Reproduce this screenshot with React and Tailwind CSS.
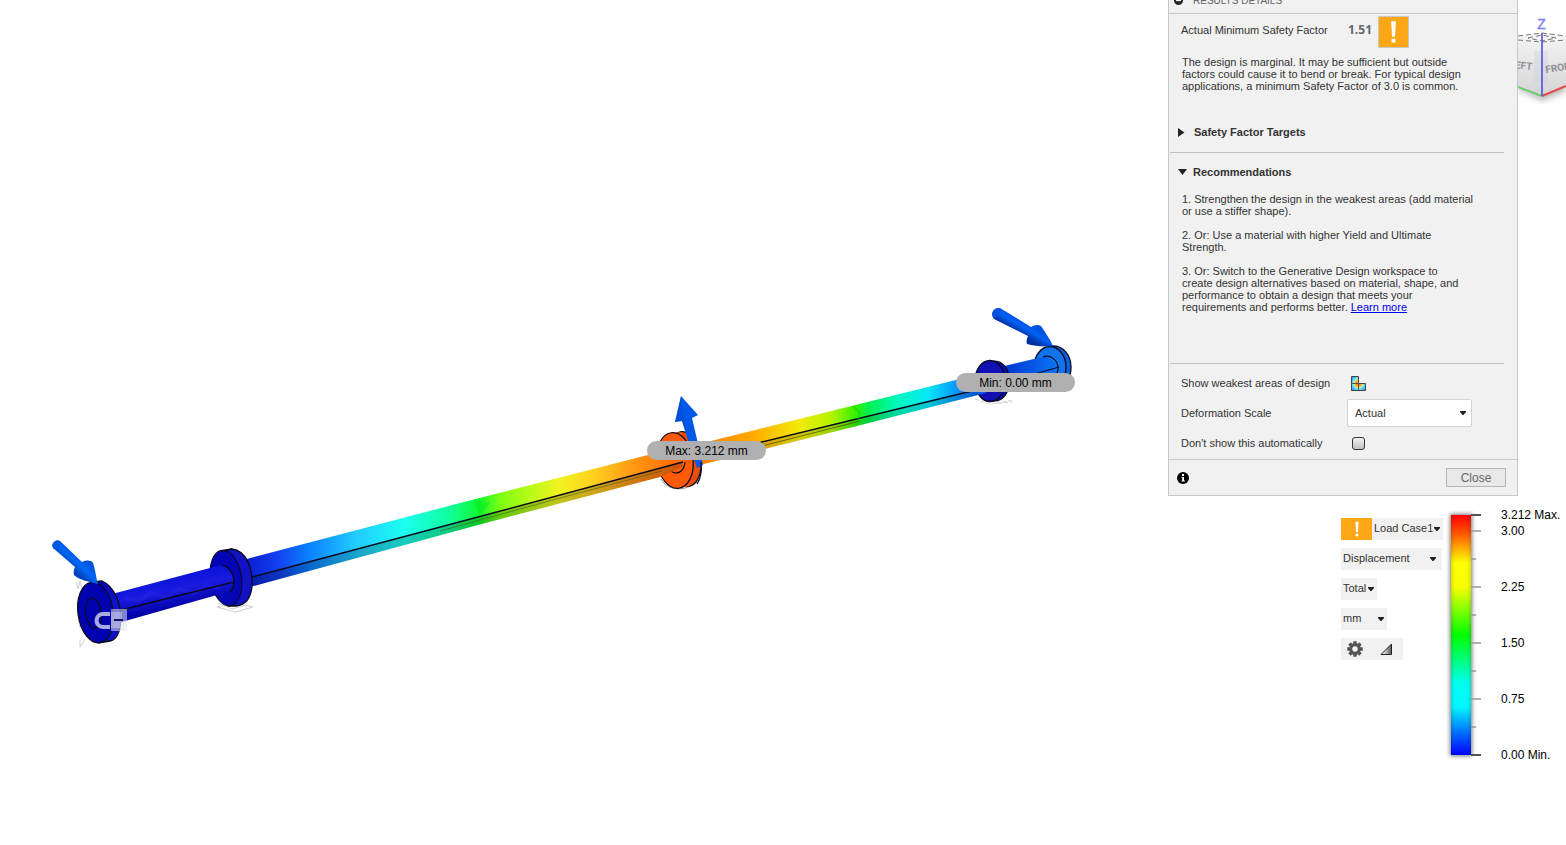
import React from 'react';

const ink = '#0a0a1e';

function BeamModel() {
  return (
    <svg className="block h-[700px] w-[1100px] max-w-none" viewBox="0 0 1100 700" role="img" aria-label="Deformed shaft">
      <defs>
        <linearGradient id="rodMid" gradientUnits="userSpaceOnUse" x1="247" y1="0" x2="685" y2="0">
          <stop offset="0" stopColor="#0a1ecf" />
          <stop offset="0.07" stopColor="#1240f0" />
          <stop offset="0.14" stopColor="#0a80ff" />
          <stop offset="0.25" stopColor="#22ccff" />
          <stop offset="0.36" stopColor="#1cfff0" />
          <stop offset="0.46" stopColor="#10ffa0" />
          <stop offset="0.53" stopColor="#10f830" />
          <stop offset="0.58" stopColor="#80ff10" />
          <stop offset="0.71" stopColor="#f0f420" />
          <stop offset="0.79" stopColor="#ffd020" />
          <stop offset="0.88" stopColor="#ff9a14" />
          <stop offset="1" stopColor="#ff6000" />
        </linearGradient>
        <linearGradient id="rodRight" gradientUnits="userSpaceOnUse" x1="695" y1="0" x2="985" y2="0">
          <stop offset="0" stopColor="#ff7a00" />
          <stop offset="0.2" stopColor="#ffac00" />
          <stop offset="0.36" stopColor="#f3ea08" />
          <stop offset="0.47" stopColor="#b4f400" />
          <stop offset="0.55" stopColor="#3cf000" />
          <stop offset="0.6" stopColor="#00f050" />
          <stop offset="0.7" stopColor="#00f8c0" />
          <stop offset="0.8" stopColor="#06e8f4" />
          <stop offset="0.9" stopColor="#0a98fc" />
          <stop offset="1" stopColor="#0a50e0" />
        </linearGradient>
        <linearGradient id="rodLeft" gradientUnits="userSpaceOnUse" x1="160" y1="578" x2="167" y2="612">
          <stop offset="0" stopColor="#0a14d8" />
          <stop offset="0.4" stopColor="#1a1ae0" />
          <stop offset="1" stopColor="#0000a0" />
        </linearGradient>
        <linearGradient id="rodEnd" gradientUnits="userSpaceOnUse" x1="1000" y1="0" x2="1058" y2="0">
          <stop offset="0" stopColor="#0030d0" />
          <stop offset="1" stopColor="#0c74f4" />
        </linearGradient>
        <linearGradient id="flangeBlue" x1="0" y1="0" x2="1" y2="0">
          <stop offset="0" stopColor="#0000b4" />
          <stop offset="1" stopColor="#1414cc" />
        </linearGradient>
        <linearGradient id="arrowLeft" gradientUnits="userSpaceOnUse" x1="82" y1="555" x2="70" y2="568">
          <stop offset="0" stopColor="#0050d8" />
          <stop offset="0.5" stopColor="#0068f4" />
          <stop offset="1" stopColor="#0040b8" />
        </linearGradient>
        <linearGradient id="arrowRight" gradientUnits="userSpaceOnUse" x1="1020" y1="318" x2="1013" y2="330">
          <stop offset="0" stopColor="#0050e0" />
          <stop offset="0.45" stopColor="#0060f4" />
          <stop offset="1" stopColor="#0030a0" />
        </linearGradient>
      </defs>

      {/* right end flange and stub */}
      <path d="M1051 346 C1063 345 1071 355 1071 367 C1071 378 1066 386 1058 387 L1048 387 Z" fill="#0a62e0" stroke={ink} strokeWidth="1.3" />
      <ellipse cx="1050" cy="367" rx="16" ry="20.5" fill="#1274ec" stroke={ink} strokeWidth="1.3" />
      <path d="M1000 367 L1042 357 C1052 357 1058 364 1057 374 L1050 379 L1004 390 Z" fill="url(#rodEnd)" />
      <path d="M1024 377 L1059 367" stroke={ink} strokeWidth="1" />
      <path d="M1043 357 C1050 354 1058 360 1058 368 C1058 373 1056 376 1053 378" fill="none" stroke={ink} strokeWidth="1.2" />

      {/* support flange at the minimum */}
      <path d="M985 398 l12 5 l16 -3 M975 399 l14 5 l23 -2" stroke="#cfcfcf" strokeDasharray="4 2" fill="none" />
      <ellipse cx="995" cy="381" rx="14.500" ry="20" fill="#0c0cb4" stroke={ink} strokeWidth="1.2" />
      <ellipse cx="990" cy="381" rx="15" ry="20.500" fill="#1010b4" stroke={ink} strokeWidth="1.3" />

      {/* right span */}
      <path d="M699 444 L980 374 C986 378 989 386 986 393 L978 395 L857 426 L700 465 Z" fill="url(#rodRight)" />
      <path d="M762 443 L978 389 L978 395 L857 426 L750 453 Z" fill="#000" opacity="0.13" />
      <path d="M700 458 L762 442 L980 389" stroke={ink} strokeWidth="1.3" fill="none" />
      <path d="M762 446 L860 421" stroke="#4c4a10" strokeWidth="1" opacity="0.75" />
      <path d="M853 406 L860 413 L857 425" fill="none" stroke="#00d000" strokeWidth="2" opacity="0.4" />

      {/* centre flange */}
      <path d="M661 479 C668 491 684 492 697 482" fill="none" stroke="#8c8c8c" strokeWidth="1" />
      <ellipse cx="685" cy="459" rx="16" ry="27.500" transform="rotate(-8 685 459)" fill="#e84c08" stroke={ink} strokeWidth="1.3" />
      <path d="M672 433 L682 432 L690 486 L680 488 Z" fill="#f05408" />
      <ellipse cx="675" cy="460.500" rx="18" ry="28" transform="rotate(-8 675 460.500)" fill="#ff5a08" stroke={ink} strokeWidth="1.2" />
      <path d="M671 471 C676 475 684 473 685 462" fill="none" stroke={ink} strokeWidth="1.2" />

      {/* middle span */}
      <path d="M243 560 L460 503 L648 455 L676 447 C684 452 687 462 682 467 L660 477 L478 525 L250 587 Z" fill="url(#rodMid)" />
      <path d="M250 577.500 L478 517 L683 462 L682 467 L660 477 L478 525 L250 587 Z" fill="#000" opacity="0.2" />
      <path d="M250 577.500 L478 517 L683 462" stroke={ink} strokeWidth="1.4" fill="none" />
      <path d="M440 531 L560 498 L662 471" stroke="#4c5818" strokeWidth="1" fill="none" opacity="0.6" />
      <path d="M474 499 L490 503 L480 517" fill="#00e010" opacity="0.35" />

      {/* second flange */}
      <path d="M217 607 l18 -4 l18 4 l-18 5 Z M218 603 l14 6 l14 -4" stroke="#d0d0d0" fill="none" strokeWidth="1" />
      <path d="M221 551 L232 549 C246 551 253 567 252 586 C251 599 245 605 236 606 L228 606 Z" fill="#1212c4" stroke={ink} strokeWidth="1.3" />
      <ellipse cx="226" cy="578" rx="15.500" ry="28" transform="rotate(-9 226 578)" fill="#0404b4" stroke={ink} strokeWidth="1.1" />
      <path d="M222 551 L232 549" stroke={ink} strokeWidth="1.3" />

      {/* left span */}
      <path d="M112 594 L210 568 L222 565 C231 567 236 578 233 588 L230 592 L217 595 L118 623 Z" fill="url(#rodLeft)" />
      <path d="M125 598 l14 3 l12 -8 l15 4 l14 -8 l14 4 l12 -8 l14 3" fill="none" stroke="#3434f0" strokeWidth="4" opacity="0.25" />
      <path d="M222 565 C231 567 236 578 233 588 L230 592" fill="none" stroke={ink} strokeWidth="1.3" />
      <path d="M118 611 L165 599 L234 582" stroke={ink} strokeWidth="1.3" fill="none" />

      {/* left end flange */}
      <path d="M76 582 l2 7 l2 -8 l2 8 M80 596 l-2 9 l3 -6 M80 640 l0 7 l5 -8 M82 620 l-3 7 l4 -2" stroke="#cfcfcf" fill="none" />
      <path d="M92 582 L102 581 C114 586 121 603 121 620 C120 633 116 640 110 641 L99 643 Z" fill="url(#flangeBlue)" stroke={ink} strokeWidth="1.3" />
      <ellipse cx="95.500" cy="612.500" rx="17.500" ry="30.500" transform="rotate(-8 95.500 612.500)" fill="#0202b0" stroke={ink} strokeWidth="1.3" />
      <ellipse cx="93.500" cy="613" rx="8" ry="15" transform="rotate(-8 93.500 613)" fill="none" stroke={ink} strokeWidth="1.2" />

      {/* fixed constraint glyph */}
      <rect x="111" y="609" width="16" height="22" fill="#e4e4f4" opacity="0.55" />
      <rect x="111" y="612" width="11" height="16" fill="#fff" opacity="0.3" />
      <path d="M110 614 H103 A6 6 0 0 0 103 627 H110" fill="none" stroke="#c8c8f0" strokeWidth="4" opacity="0.85" />
      <path d="M114 620 H123" stroke="#101070" strokeWidth="2" />

      {/* load arrows */}
      <path d="M60 541 L82 562 C86 560 91 560 93 563 C95 568 96 577 98 584 C90 582 79 580 74 575 C73 572 74 569 75 567 L53 548 C51 543 56 539 60 541 Z" fill="url(#arrowLeft)" />
      <ellipse cx="56.500" cy="544.500" rx="3.500" ry="4.500" transform="rotate(45 56.500 544.500)" fill="#0058e0" />
      <path d="M1000 308 L1031 327 C1034 325 1038 324 1041 326 C1045 332 1050 339 1053 346 C1044 347 1034 346 1027 344 C1026 341 1027 338 1028 336 L994 319 C990 314 994 307 1000 308 Z" fill="url(#arrowRight)" />
      <ellipse cx="996" cy="313" rx="3.500" ry="5" transform="rotate(28 996 313)" fill="#0050d8" />
      <path d="M681 396 L698 415 L692 418 L703 465 L697 468 L682 421 L675 422 Z" fill="#0058e8" />
      <path d="M681 396 L675 422 L682 421 L686 434 Z" fill="#0048c8" opacity="0.5" />
      <path d="M697 484 C701 478 702 470 701 462" stroke={ink} fill="none" strokeWidth="1.2" />
    </svg>
  );
}

function ViewCube() {
  return (
    <svg className="block h-[90px] w-full" viewBox="0 0 48 90" preserveAspectRatio="xMinYMin slice" role="img" aria-label="View cube">
      <defs>
        <linearGradient id="cubeFace" x1="0" y1="0" x2="0" y2="1">
          <stop offset="0" stopColor="#f6f6f6" />
          <stop offset="1" stopColor="#d4d4d6" />
        </linearGradient>
        <filter id="soft" x="-30%" y="-30%" width="160%" height="160%">
          <feGaussianBlur stdDeviation="3" />
        </filter>
      </defs>
      <path d="M0 76 L25 87 L48 77 V68 H0 Z" fill="#bbb" filter="url(#soft)" />
      <path d="M0 22 L24 19 L48 22 V72 L24 82 L0 73 Z" fill="url(#cubeFace)" />
      <path d="M0 22 L24 19 L48 22 L24 28 Z" fill="#f4f4f4" />
      <rect x="16" y="37" width="14" height="32" fill="#cfd0dc" opacity="0.4" />
      <path d="M0 22 L24 19 L48 22 M0 26 L24 28 L48 26 M10 24 L24 21 L38 24 L24 27 Z" fill="none" stroke="#777" strokeWidth="1" strokeDasharray="5 3" />
      <path d="M0 73 L24 82" stroke="#6ad06a" strokeWidth="2" />
      <path d="M24 82 L48 72" stroke="#e44848" strokeWidth="2" />
      <path d="M24 19 V82" stroke="#5050dc" strokeWidth="1.600" />
      <text x="23.500" y="15" textAnchor="middle" fontFamily="Liberation Sans, sans-serif" fontSize="14" fill="#7c7cf4" stroke="#7c7cf4" strokeWidth="0.400">Z</text>
      <text x="14" y="56" textAnchor="end" transform="rotate(6 14 56)" fontFamily="Liberation Sans Narrow, Roboto, sans-serif" fontSize="10" fontWeight="700" fill="#8d9096">LEFT</text>
      <text x="28" y="59" transform="rotate(-9 28 59)" fontFamily="Liberation Sans Narrow, Roboto, sans-serif" fontSize="10" fontWeight="700" fill="#8d9096">FRONT</text>
    </svg>
  );
}

function Caret({ className }) {
  return (
    <svg className={`pointer-events-none absolute top-1/2 h-1 w-[6px] -translate-y-1/2 ${className}`} viewBox="0 0 6 4" aria-hidden="true">
      <path d="M0 0 H6 V1 L3.500 4 H2.500 L0 1 Z" fill="#222" />
    </svg>
  );
}

function CompactSelect({ label, value, className, caret = 'right-[3px]' }) {
  return (
    <div className={`relative h-[22px] ${className}`}>
      <select aria-label={label} className="block h-full w-full appearance-none bg-[#f1f1f1] pb-[2px] pl-[2px] text-[11px] text-[#333] outline-none">
        <option>{value}</option>
      </select>
      <Caret className={caret} />
    </div>
  );
}

function Bang({ className }) {
  return (
    <svg className={className} viewBox="0 0 30 30" aria-hidden="true">
      <path d="M12.500 4 H17.500 L16.500 20 H13.500 Z" fill="#fff" />
      <rect x="13" y="22" width="4" height="4" fill="#fff" />
    </svg>
  );
}

function ResultsPanel() {
  return (
    <section className="-mt-3 w-[350px] shrink-0 border border-t-0 border-[#c8c8c8] bg-[#f1f1f1] text-[11px] leading-3 text-[#333]">
      <header className="flex h-[26px] items-center gap-[10px] border-b border-[#c8c8c8] pl-[5px] text-[#666]">
        <svg className="h-[9px] w-[9px]" viewBox="0 0 9 9" aria-hidden="true">
          <circle cx="4.500" cy="4.500" r="4.500" fill="#2a2a2a" />
          <path d="M2 4.500 H7" stroke="#fff" strokeWidth="1.200" />
        </svg>
        <h2 className="text-[10px]">RESULTS DETAILS</h2>
      </header>

      <div className="flex h-[34px] items-start pl-3 pt-[2px]">
        <span className="w-[167px] pt-2">Actual Minimum Safety Factor</span>
        <span className="w-[30px] pt-2 font-['Open_Sans',sans-serif] text-xs leading-3 font-bold text-[#666]">1.51</span>
        <span className="h-8 w-[31px] border border-[#c8c8c8] bg-[#fda616]">
          <Bang className="h-full w-full" />
        </span>
      </div>

      <p className="pb-[30px] pl-[13px] pt-2">
        The design is marginal. It may be sufficient but outside<br />
        factors could cause it to bend or break. For typical design<br />
        applications, a minimum Safety Factor of 3.0 is common.
      </p>

      <button type="button" className="flex h-5 w-full items-center gap-[9px] pl-[9px] text-left font-bold">
        <svg className="h-[9px] w-[7px]" viewBox="0 0 7 9" aria-hidden="true"><path d="M0 0 L6.500 4.500 L0 9 Z" fill="#222" /></svg>
        Safety Factor Targets
      </button>
      <hr className="ml-px mr-[13px] mt-[10px] border-[#c0c0c0]" />

      <button type="button" className="mt-[9px] flex h-5 w-full items-center gap-[6px] pl-[9px] text-left font-bold">
        <svg className="h-[6px] w-[9px]" viewBox="0 0 9 6" aria-hidden="true"><path d="M0 0 H9 L4.500 6 Z" fill="#222" /></svg>
        Recommendations
      </button>
      <div className="flex flex-col gap-3 pb-[50px] pl-[13px] pt-[11px]">
        <p>
          1. Strengthen the design in the weakest areas (add material<br />
          or use a stiffer shape).
        </p>
        <p>
          2. Or: Use a material with higher Yield and Ultimate<br />
          Strength.
        </p>
        <p>
          3. Or: Switch to the Generative Design workspace to<br />
          create design alternatives based on material, shape, and<br />
          performance to obtain a design that meets your<br />
          requirements and performs better. <a href="#learn-more" className="text-[#0000ee] underline">Learn more</a>
        </p>
      </div>
      <hr className="ml-px mr-[13px] border-[#c0c0c0]" />

      <div className="pl-3 pt-1">
        <div className="flex h-[30px] items-center">
          <span className="w-[170px]">Show weakest areas of design</span>
          <button type="button" aria-label="Show weakest areas of design">
            <svg className="h-[15px] w-[15px]" viewBox="0 0 15 15" aria-hidden="true">
              <defs>
                <radialGradient id="heat" gradientUnits="userSpaceOnUse" cx="7.500" cy="7.500" r="9">
                  <stop offset="0" stopColor="#ff6a00" />
                  <stop offset="0.350" stopColor="#ffb030" />
                  <stop offset="0.500" stopColor="#b8f0b0" />
                  <stop offset="0.700" stopColor="#50d4f8" />
                  <stop offset="1" stopColor="#5080f0" />
                </radialGradient>
              </defs>
              <path d="M0.500 0.500 H7.500 V7.500 H14.500 V14.500 H0.500 Z" fill="url(#heat)" stroke="#444" />
              <path d="M0.500 7.500 H7.500 V14.500" fill="none" stroke="#555" />
            </svg>
          </button>
        </div>
        <div className="flex h-[30px] items-center">
          <label htmlFor="deformation" className="w-[166px]">Deformation Scale</label>
          <div className="relative h-7 w-[125px]">
            <select id="deformation" className="block h-full w-full appearance-none rounded-xs border border-[#d4d4d4] bg-white pl-[7px] text-[11px] text-[#333] outline-none">
              <option>Actual</option>
            </select>
            <Caret className="right-[6px]" />
          </div>
        </div>
        <div className="flex h-[30px] items-center">
          <label htmlFor="auto" className="w-[171px]">Don't show this automatically</label>
          <input id="auto" type="checkbox" className="h-[13px] w-[13px] appearance-none rounded-[3px] border border-[#333] bg-linear-to-b from-[#f4f4f4] to-[#c0c0c0]" />
        </div>
      </div>

      <footer className="mt-px flex h-9 items-center justify-between border-t border-[#c8c8c8] pl-2 pr-[11px]">
        <button type="button" aria-label="Information">
          <svg className="h-3 w-3" viewBox="0 0 12 12" aria-hidden="true">
            <circle cx="6" cy="6" r="6" fill="#000" />
            <path d="M5 2 H7 V4 H5 Z M4.500 5 H7 V8.500 H8 V9.500 H4.500 V8.500 H5.200 V6 H4.500 Z" fill="#fff" />
          </svg>
        </button>
        <button type="button" className="h-[19px] w-[60px] border border-[#b4b4b4] bg-[#e8e8e8] text-xs leading-none text-[#666]">Close</button>
      </footer>
    </section>
  );
}

function Legend() {
  return (
    <div className="flex items-start">
      <svg className="h-[260px] w-[50px] shrink-0" viewBox="0 0 50 260" role="img" aria-label="Displacement colour scale">
        <defs>
          <linearGradient id="scale" x1="0" y1="0" x2="0" y2="1">
            <stop offset="0" stopColor="#ff0000" />
            <stop offset="0.080" stopColor="#ff5a00" />
            <stop offset="0.200" stopColor="#ffff00" />
            <stop offset="0.300" stopColor="#f8ff00" />
            <stop offset="0.500" stopColor="#00ff00" />
            <stop offset="0.700" stopColor="#00fff0" />
            <stop offset="0.800" stopColor="#00f8ff" />
            <stop offset="0.900" stopColor="#0078ff" />
            <stop offset="1" stopColor="#0000ff" />
          </linearGradient>
          <linearGradient id="edge" x1="0" y1="0" x2="1" y2="0">
            <stop offset="0" stopColor="#000" stopOpacity="0.120" />
            <stop offset="0.200" stopColor="#000" stopOpacity="0" />
            <stop offset="0.800" stopColor="#000" stopOpacity="0" />
            <stop offset="1" stopColor="#000" stopOpacity="0.120" />
          </linearGradient>
          <filter id="barShadow" x="-50%" y="-10%" width="200%" height="120%">
            <feGaussianBlur stdDeviation="2" />
          </filter>
        </defs>
        <rect x="9" y="9" width="22" height="242" fill="#777" filter="url(#barShadow)" />
        <rect x="10" y="10" width="20" height="240" fill="url(#scale)" />
        <rect x="10" y="10" width="20" height="240" fill="url(#edge)" />
        <path d="M30 10 H40 M30 250 H40" stroke="#555" strokeWidth="2" />
        <path d="M30 26 H40 M30 82 H40 M30 138 H40 M30 194 H40 M30 54 H35 M30 110 H35 M30 166 H35 M30 222 H35" stroke="#999" strokeWidth="1.500" />
      </svg>
      <ul className="ml-[10px] mt-[2px] whitespace-nowrap text-xs leading-4 text-black">
        <li>3.212 Max.</li>
        <li className="mb-10">3.00</li>
        <li className="mb-10">2.25</li>
        <li className="mb-10">1.50</li>
        <li className="mb-10">0.75</li>
        <li>0.00 Min.</li>
      </ul>
    </div>
  );
}

function ResultControls() {
  return (
    <div className="mt-[13px] flex w-[102px] shrink-0 flex-col gap-2">
      <div className="flex">
        <span className="flex h-[22px] w-[31px] items-center justify-center bg-[#fda616]">
          <Bang className="h-5 w-5" />
        </span>
        <CompactSelect label="Load case" value="Load Case1" className="w-[71px]" />
      </div>
      <CompactSelect label="Result type" value="Displacement" className="w-[101px]" caret="right-[6px]" />
      <CompactSelect label="Component" value="Total" className="w-9" />
      <CompactSelect label="Unit" value="mm" className="w-[46px]" />
      <div className="flex h-[22px] w-[62px] items-center gap-4 bg-[#f1f1f1] pl-[6px]">
        <button type="button" aria-label="Legend options">
          <svg className="block h-4 w-4" viewBox="0 0 16 16" aria-hidden="true">
            <g fill="#555">
              <rect x="6.250" y="0.250" width="3.500" height="15.500" />
              <rect x="6.250" y="0.250" width="3.500" height="15.500" transform="rotate(45 8 8)" />
              <rect x="6.250" y="0.250" width="3.500" height="15.500" transform="rotate(90 8 8)" />
              <rect x="6.250" y="0.250" width="3.500" height="15.500" transform="rotate(135 8 8)" />
            </g>
            <circle cx="8" cy="8" r="4.300" fill="#f1f1f1" stroke="#555" strokeWidth="3.200" />
          </svg>
        </button>
        <button type="button" aria-label="Contrast">
          <svg className="block h-[14px] w-[14px]" viewBox="0 0 14 14" aria-hidden="true">
            <defs>
              <linearGradient id="wedge" x1="0" y1="0" x2="1" y2="0">
                <stop offset="0.200" stopColor="#eee" />
                <stop offset="1" stopColor="#555" />
              </linearGradient>
            </defs>
            <path d="M2 12.500 H12.500 V2 Z" fill="url(#wedge)" stroke="#222" />
          </svg>
        </button>
      </div>
    </div>
  );
}

function ValueTag({ children, className }) {
  return (
    <div className={`absolute flex h-[19px] w-[119px] items-center justify-center rounded-full bg-[#b0b0b0] text-xs text-black ${className}`}>
      {children}
    </div>
  );
}

export default function App() {
  return (
    <div className="flex min-h-screen overflow-hidden bg-white font-['Liberation_Sans',Arial,sans-serif]">
      <main className="relative min-w-0 flex-1 overflow-hidden">
        <BeamModel />
        <ValueTag className="left-[647px] top-[441px]">Max: 3.212 mm</ValueTag>
        <ValueTag className="left-[956px] top-[373px]">Min: 0.00 mm</ValueTag>
      </main>
      <aside className="w-[398px] shrink-0">
        <div className="flex">
          <ResultsPanel />
          <div className="mt-[14px] min-w-0 flex-1">
            <ViewCube />
          </div>
        </div>
        <div className="mt-[9px] flex pl-[173px]">
          <ResultControls />
          <div className="-ml-[2px]">
            <Legend />
          </div>
        </div>
      </aside>
    </div>
  );
}
